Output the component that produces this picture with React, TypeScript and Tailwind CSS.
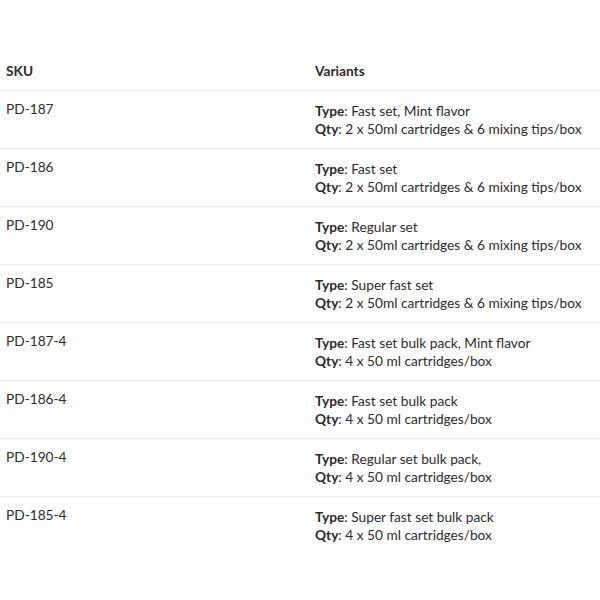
import React from 'react';

const rows = [
    { sku: 'PD-187', type: 'Fast set, Mint flavor', qty: '2 x 50ml cartridges & 6 mixing tips/box' },
    { sku: 'PD-186', type: 'Fast set', qty: '2 x 50ml cartridges & 6 mixing tips/box' },
    { sku: 'PD-190', type: 'Regular set', qty: '2 x 50ml cartridges & 6 mixing tips/box' },
    { sku: 'PD-185', type: 'Super fast set', qty: '2 x 50ml cartridges & 6 mixing tips/box' },
    { sku: 'PD-187-4', type: 'Fast set bulk pack, Mint flavor', qty: '4 x 50 ml cartridges/box' },
    { sku: 'PD-186-4', type: 'Fast set bulk pack', qty: '4 x 50 ml cartridges/box' },
    { sku: 'PD-190-4', type: 'Regular set bulk pack,', qty: '4 x 50 ml cartridges/box' },
    { sku: 'PD-185-4', type: 'Super fast set bulk pack', qty: '4 x 50 ml cartridges/box' },
];

export default function App() {
    return (
        <div className="w-[600px] h-[600px] bg-white pt-[52px] text-[#2b2b2b] font-['Lato',sans-serif] text-[13.7px]">
            {/* Header */}
            <div className="grid grid-cols-[309px_1fr] h-[39px] items-center border-b border-[#ebebeb] px-[6px]">
                <div className="font-bold">SKU</div>
                <div className="font-bold">Variants</div>
            </div>

            {/* Rows */}
            {rows.map((row, idx) => (
                <div
                    key={row.sku}
                    className={`grid grid-cols-[309px_1fr] h-[58px] px-[6px] ${idx < rows.length - 1 ? 'border-b border-[#ebebeb]' : ''}`}
                >
                    <div className="pt-[9px] leading-[18px]">{row.sku}</div>
                    <div className="pt-[11px] leading-[18px]">
                        <div><span className="font-bold">Type</span>: {row.type}</div>
                        <div><span className="font-bold">Qty</span>: {row.qty}</div>
                    </div>
                </div>
            ))}
        </div>
    );
}
